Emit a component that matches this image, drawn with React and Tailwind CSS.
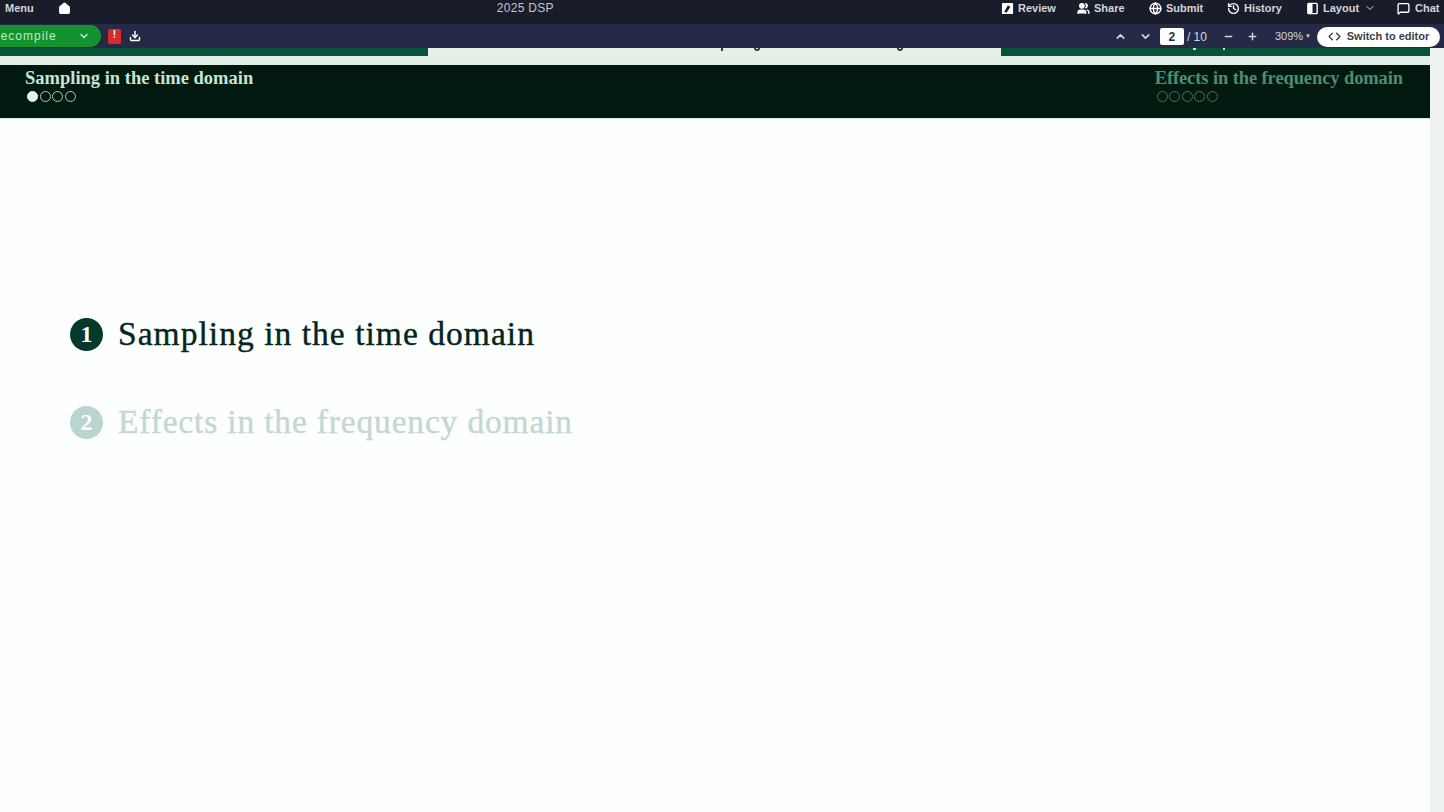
import { ChevronDown, ChevronUp, Download, History, Home, Minus, Plus, Code, MessageSquare, Users, Globe } from "lucide-react";

function ReviewIcon({ className }) {
  return (
    <svg viewBox="0 0 14 14" className={className}>
      <rect x="1" y="1" width="12" height="12" rx="1" fill="#fff" />
      <path d="M3.5 10.5 7.5 3.5 10 5.5 6 11.5Z" fill="#191c29" />
    </svg>
  );
}

function LayoutIcon({ className }) {
  return (
    <svg viewBox="0 0 14 14" className={className}>
      <rect x="2" y="1.5" width="10" height="11" rx="1" fill="none" stroke="#fff" strokeWidth="1.5" />
      <rect x="2" y="1.5" width="5" height="11" fill="#fff" />
    </svg>
  );
}

const topActions = [
  { label: "Review", Icon: ReviewIcon, width: "w-[76px]" },
  { label: "Share", Icon: Users, width: "w-[72px]", iconClass: "fill-white" },
  { label: "Submit", Icon: Globe, width: "w-[78px]" },
  { label: "History", Icon: History, width: "w-[79px]" },
  { label: "Layout", Icon: LayoutIcon, width: "w-[91px]" },
];

function Dots({ total, active, tone }) {
  return (
    <div className="mt-[2px] ml-[2px] flex gap-[1.5px]">
      {Array.from({ length: total }, (_, i) => (
        <span
          key={i}
          className={
            i === active
              ? "h-[11px] w-[11px] rounded-full border border-[#e8f5ee] bg-[#e8f5ee]"
              : `h-[11px] w-[11px] rounded-full border-[1.5px] ${tone}`
          }
        />
      ))}
    </div>
  );
}

function OutlineItem({ number, title, muted }) {
  return (
    <div className="flex h-[34px] items-center gap-[15px]">
      <span
        className={`flex h-[33px] w-[33px] shrink-0 items-center justify-center rounded-full font-['Liberation_Serif',serif] text-[24px] font-bold text-white ${
          muted ? "bg-[#b9d5d1]" : "bg-[#04392b]"
        }`}
      >
        {number}
      </span>
      <span
        className={`whitespace-nowrap font-['Liberation_Serif',serif] text-[33.5px] [-webkit-text-stroke:0.4px] ${
          muted ? "tracking-[0.83px] text-[#c3d8d4]" : "tracking-[1.04px] text-[#03261d]"
        }`}
      >
        {title}
      </span>
    </div>
  );
}

export default function App() {
  return (
    <div className="flex h-[812px] w-[1444px] flex-col overflow-hidden bg-[#fdfefe] font-['Liberation_Sans',sans-serif]">
      <header className="flex h-[24px] shrink-0 items-center bg-[#191c29] pb-[8px] text-[11px] font-bold text-[#d4d6dc]">
        <span className="ml-[5px]">Menu</span>
        <Home className="ml-[24px] h-[13px] w-[13px] fill-white text-white" />
        <span className="ml-[426px] text-[12px] font-normal tracking-[0.3px] text-[#c3c6ce]">2025 DSP</span>
        <div className="ml-auto flex items-center">
          {topActions.map(({ label, Icon, width, iconClass }) => (
            <div key={label} className={`flex items-center gap-[4px] ${width}`}>
              <Icon className={`h-[13px] w-[13px] text-white ${iconClass || ""}`} strokeWidth={2.5} />
              <span>{label}</span>
              {label === "Layout" && <ChevronDown className="ml-[1px] h-[12px] w-[12px]" />}
            </div>
          ))}
          <div className="flex w-[47px] items-center gap-[5px]">
            <MessageSquare className="h-[13px] w-[13px] text-white" strokeWidth={2.5} />
            <span>Chat</span>
          </div>
        </div>
      </header>

      <div className="flex h-[24px] shrink-0 items-center bg-[#252b46] text-[11px] text-[#d4d7e0]">
        <div className="flex h-[22px] w-[101px] items-center justify-between rounded-r-full bg-[#14922f] pr-[11px] text-[12px] tracking-[1px] text-[#b9f0c3]">
          <span className="-ml-[9px]">Recompile</span>
          <ChevronDown className="h-[12px] w-[12px]" strokeWidth={3} />
        </div>
        <span className="ml-[7px] flex h-[15px] w-[13px] items-start justify-center rounded-[2px] bg-[#d92b2b] text-[10px] leading-[12px] font-bold text-white">
          !
        </span>
        <Download className="ml-[8px] h-[12px] w-[12px] text-white" strokeWidth={3} />
        <div className="mt-[1px] ml-auto flex items-center font-bold">
          <ChevronUp className="h-[13px] w-[13px]" strokeWidth={3} />
          <ChevronDown className="ml-[12px] h-[13px] w-[13px]" strokeWidth={3} />
          <span className="ml-[8px] flex h-[17px] w-[24px] items-center justify-center rounded-[2px] bg-white text-[12px] text-[#2b2f3f]">
            2
          </span>
          <span className="ml-[3px] text-[12px] font-normal">/ 10</span>
          <Minus className="ml-[16px] h-[11px] w-[11px]" strokeWidth={3} />
          <Plus className="ml-[13px] h-[11px] w-[11px]" strokeWidth={3} />
          <span className="ml-[17px] font-normal">309%</span>
          <span className="ml-[2px] text-[6px]">▼</span>
          <div className="mr-[4px] ml-[6px] flex h-[20px] w-[123px] items-center justify-center gap-[6px] rounded-full bg-white font-bold text-[#3a3f4c]">
            <Code className="h-[13px] w-[13px]" strokeWidth={2.5} />
            <span className="text-[11px]">Switch to editor</span>
          </div>
        </div>
      </div>

      <div className="flex min-h-0 flex-1">
        <div className="flex w-[1430px] shrink-0 flex-col">
          <div className="flex h-[8px] shrink-0">
            <div className="w-[428px] bg-[#07533a]" />
            {/* descenders of the clipped slide title */}
            <div className="flex flex-1 items-start bg-[#e6efe8]">
              <span className="ml-[293px] h-[3px] w-[2px] bg-[#2f3a35]" />
              <span className="ml-[31px] h-[3px] w-[6px] rounded-b-full border-x-2 border-b-2 border-[#2f3a35]" />
              <span className="ml-[137px] h-[3px] w-[6px] rounded-b-full border-x-2 border-b-2 border-[#2f3a35]" />
            </div>
            <div className="flex w-[429px] items-start bg-[#07533a]">
              <span className="ml-[192px] h-[2px] w-[3px] bg-[#cfe5da]" />
              <span className="ml-[27px] h-[2px] w-[2px] bg-[#cfe5da]" />
            </div>
          </div>
          <div className="h-[9px] shrink-0 bg-[#e2efe6]" />

          <div className="flex h-[53px] shrink-0 items-start justify-between bg-[#02190f] pt-[3px] pr-[27px] pl-[25px] font-['Liberation_Serif',serif] text-[18.5px] leading-[21px] font-bold">
            <div>
              <div className="text-[#c7e3d3]">Sampling in the time domain</div>
              <Dots total={4} active={0} tone="border-[#a9cdbc]" />
            </div>
            <div>
              <div className="tracking-[-0.1px] text-[#4f8d70]">Effects in the frequency domain</div>
              <Dots total={5} active={-1} tone="border-[#3f7a5f]" />
            </div>
          </div>

          <main className="flex flex-1 flex-col gap-[54px] border-t border-[#d5ebdd] pt-[198px] pl-[70px]">
            <OutlineItem number="1" title="Sampling in the time domain" />
            <OutlineItem number="2" title="Effects in the frequency domain" muted />
          </main>
        </div>
        <div className="flex-1 bg-[#eef2f0]" />
      </div>
    </div>
  );
}
